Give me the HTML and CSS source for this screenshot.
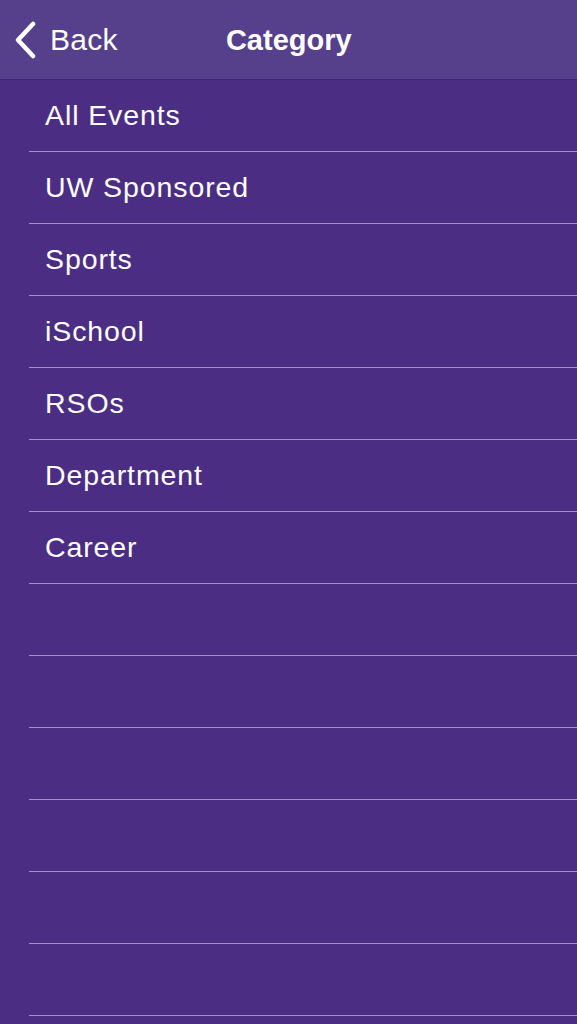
FILE: index.html
```html
<!DOCTYPE html>
<html lang="en">

<head>
    <meta charset="UTF-8">
    <meta name="viewport" content="width=device-width, initial-scale=1.0">
    <title>Category</title>
    <link rel="stylesheet" href="styles.css">
</head>

<body>
    <header class="nav_bar">
        <a class="back_btn" href="#">
            <svg class="chevron" width="22" height="38" viewBox="0 0 22 38">
                <path d="M19 3 L4 19 L19 35" fill="none" stroke="#fff" stroke-width="4.5" stroke-linecap="round" stroke-linejoin="round" />
            </svg>
            <span>Back</span>
        </a>
        <h1 class="nav_title">Category</h1>
    </header>

    <ul class="category_list">
        <li class="row">All Events</li>
        <li class="row">UW Sponsored</li>
        <li class="row">Sports</li>
        <li class="row">iSchool</li>
        <li class="row">RSOs</li>
        <li class="row">Department</li>
        <li class="row">Career</li>
        <!-- empty rows to fill the table -->
        <li class="row"></li>
        <li class="row"></li>
        <li class="row"></li>
        <li class="row"></li>
        <li class="row"></li>
        <li class="row"></li>
    </ul>
</body>

</html>
```

FILE: styles.css
```css
body {
    margin: 0;
    padding: 0;
    height: 1024px;
    overflow: hidden;
    background: #4b2e84;
    font-family: "Liberation Sans", Arial, sans-serif;
    color: #fff;
}

.nav_bar {
    height: 79px;
    background: #563f8b;
    border-bottom: 1px solid #3f2770;
    display: flex;
    align-items: center;
    padding-left: 14px;
}

.back_btn {
    display: flex;
    align-items: center;
    color: #fff;
    text-decoration: none;
    font-size: 30px;
    letter-spacing: 0.3px;
}

.chevron {
    margin-right: 14px;
    margin-top: 1px;
}

.nav_title {
    margin: 0 0 0 108px;
    font-size: 29px;
    font-weight: bold;
    padding-top: 1px;
}

.category_list {
    list-style: none;
    margin: 0;
    padding: 0 0 0 29px;
}

.row {
    height: 71px;
    border-bottom: 1px solid #a293c2;
    display: flex;
    align-items: center;
    padding-left: 16px;
    font-size: 28.5px;
    letter-spacing: 0.9px;
}
```
